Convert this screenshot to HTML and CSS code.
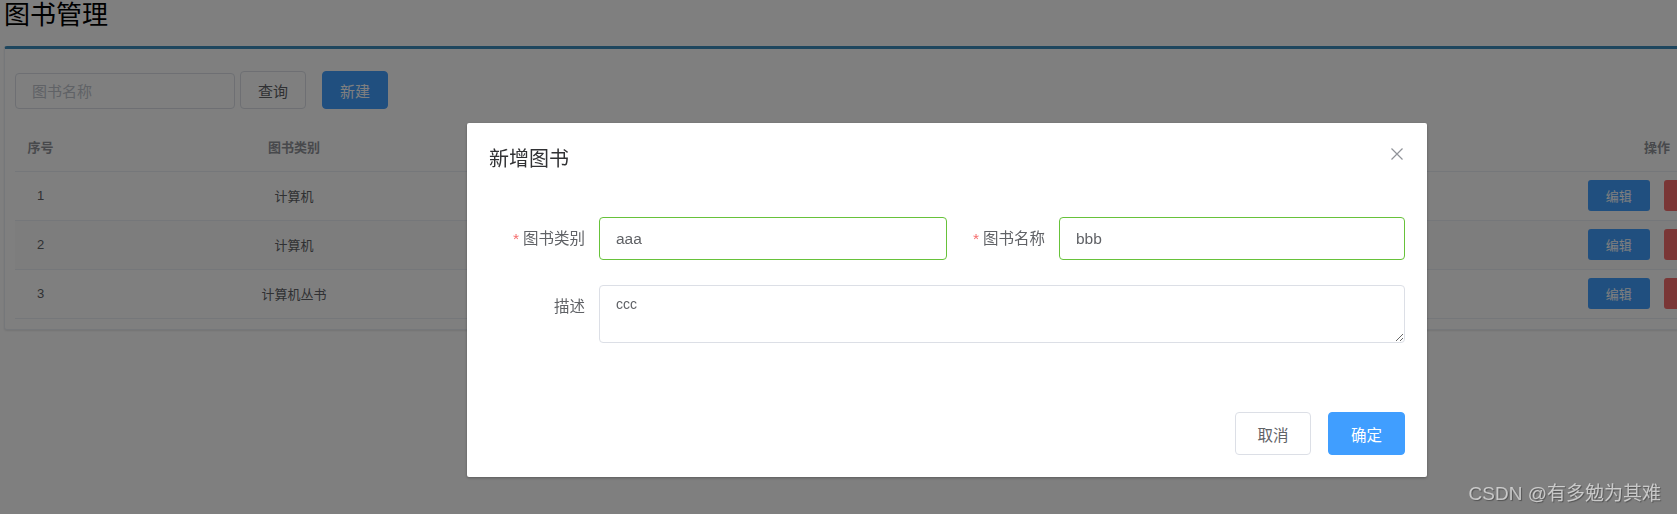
FILE: index.html
```html
<!DOCTYPE html>
<html lang="zh-CN">
<head>
    <meta charset="UTF-8">
    <meta name="viewport" content="width=device-width, initial-scale=1.0">
    <title>图书管理</title>
    <link rel="stylesheet" href="styles.css">
</head>
<body>
    <div class="page">
        <h2 class="page-title">图书管理</h2>

        <div class="box">
            <div class="toolbar">
                <input type="text" class="search-input" placeholder="图书名称">
                <button class="btn btn-query">查询</button>
                <button class="btn btn-primary">新建</button>
            </div>

            <table class="book-table">
                <colgroup>
                    <col class="col-index">
                    <col class="col-type">
                    <col class="col-name">
                    <col class="col-desc">
                    <col class="col-ops">
                </colgroup>
                <thead>
                    <tr>
                        <th>序号</th>
                        <th>图书类别</th>
                        <th>图书名称</th>
                        <th>描述</th>
                        <th>操作</th>
                    </tr>
                </thead>
                <tbody>
                    <tr>
                        <td>1</td>
                        <td>计算机</td>
                        <td>Java编程思想</td>
                        <td>经典</td>
                        <td>
                            <button class="btn-mini btn-edit">编辑</button>
                            <button class="btn-mini btn-delete">删除</button>
                        </td>
                    </tr>
                    <tr class="striped">
                        <td>2</td>
                        <td>计算机</td>
                        <td>算法导论</td>
                        <td>入门</td>
                        <td>
                            <button class="btn-mini btn-edit">编辑</button>
                            <button class="btn-mini btn-delete">删除</button>
                        </td>
                    </tr>
                    <tr>
                        <td>3</td>
                        <td>计算机丛书</td>
                        <td>深入理解计算机系统</td>
                        <td>进阶</td>
                        <td>
                            <button class="btn-mini btn-edit">编辑</button>
                            <button class="btn-mini btn-delete">删除</button>
                        </td>
                    </tr>
                </tbody>
            </table>
        </div>
    </div>

    <div class="dialog-wrapper">
        <div class="dialog">
            <div class="dialog-header">
                <span class="dialog-title">新增图书</span>
                <button class="dialog-close" aria-label="Close">
                    <svg width="12" height="12" viewBox="0 0 12 12">
                        <path d="M0.5 0.5 L11.5 11.5 M11.5 0.5 L0.5 11.5" stroke="#909399" stroke-width="1.2" fill="none"/>
                    </svg>
                </button>
            </div>

            <div class="dialog-body">
                <div class="form-row">
                    <div class="form-item form-item-half">
                        <label class="form-label"><span class="required">*</span>图书类别</label>
                        <input type="text" class="form-input is-success" value="aaa">
                    </div>
                    <div class="form-item form-item-rest">
                        <label class="form-label"><span class="required">*</span>图书名称</label>
                        <input type="text" class="form-input is-success" value="bbb">
                    </div>
                </div>
                <div class="form-row">
                    <div class="form-item form-item-rest">
                        <label class="form-label">描述</label>
                        <textarea class="form-textarea">ccc</textarea>
                    </div>
                </div>
            </div>

            <div class="dialog-footer">
                <button class="btn btn-cancel">取消</button>
                <button class="btn btn-confirm">确定</button>
            </div>
        </div>
    </div>

    <div class="watermark">CSDN @有多勉为其难</div>
</body>
</html>
```

FILE: styles.css
```css
* {
    margin: 0;
    padding: 0;
    box-sizing: border-box;
}

html,
body {
    overflow: hidden;
}

body {
    width: 1677px;
    height: 514px;
    background-color: #ffffff;
    color: #606266;
    font-family: "Liberation Sans", "Noto Sans CJK SC", sans-serif;
}

button,
input,
textarea {
    font-family: inherit;
}

.page {
    padding: 0 4px;
}

.page-title {
    font-size: 26px;
    font-weight: normal;
    line-height: 31px;
    color: #000000;
    margin-bottom: 15px;
}

/* card with the coloured top border */
.box {
    width: 1780px;
    background-color: #ffffff;
    border: 1px solid #ebeef5;
    border-top: 3px solid #3c8dbc;
    border-radius: 3px;
    box-shadow: 0 1px 2px rgba(0, 0, 0, 0.1);
    padding: 22px 10px 10px 10px;
}

.toolbar {
    display: flex;
    align-items: flex-end;
    height: 38px;
}

.search-input {
    width: 220px;
    height: 36px;
    border: 1px solid #dcdfe6;
    border-radius: 4px;
    padding: 0 16px;
    font-size: 15px;
    color: #606266;
    outline: none;
    margin-right: 5px;
}

.search-input::placeholder {
    color: #c0c4cc;
}

.btn {
    height: 38px;
    width: 66px;
    border: 1px solid #dcdfe6;
    border-radius: 4px;
    background-color: #ffffff;
    color: #606266;
    font-size: 15px;
    cursor: pointer;
}

.btn-query {
    margin-right: 16px;
}

.btn-primary {
    background-color: #409eff;
    border-color: #409eff;
    color: #ffffff;
}

/* table */
.book-table {
    margin-top: 13px;
    width: 1742px;
    table-layout: fixed;
    border-collapse: collapse;
    font-size: 13px;
}

.col-index { width: 51px; }
.col-type { width: 456px; }
.col-name { width: 518px; }
.col-desc { width: 517px; }
.col-ops { width: 200px; }

.book-table th,
.book-table td {
    height: 49px;
    padding: 0;
    text-align: center;
    border-bottom: 1px solid #ebeef5;
}

.book-table th {
    color: #909399;
    font-weight: bold;
}

.book-table td {
    color: #606266;
}

.book-table tr.striped td {
    background-color: #fafafa;
}

.btn-mini {
    width: 62px;
    height: 31px;
    border: none;
    border-radius: 3px;
    color: #ffffff;
    font-size: 13px;
    vertical-align: middle;
}

.btn-edit {
    background-color: #409eff;
}

.btn-delete {
    background-color: #f56c6c;
    margin-left: 11px;
}

/* dialog */
.dialog-wrapper {
    position: fixed;
    top: 0;
    left: 0;
    right: 0;
    bottom: 0;
    background-color: rgba(0, 0, 0, 0.5);
}

.dialog {
    width: 960px;
    margin: 123px 0 0 467px;
    background-color: #ffffff;
    border-radius: 2px;
    box-shadow: 0 1px 3px rgba(0, 0, 0, 0.3);
}

.dialog-header {
    position: relative;
    padding: 24px 20px 10px 22px;
}

.dialog-title {
    display: block;
    font-size: 20px;
    line-height: 24px;
    color: #303133;
}

.dialog-close {
    position: absolute;
    top: 25px;
    right: 24px;
    width: 12px;
    height: 12px;
    border: none;
    background: transparent;
    display: flex;
}

.dialog-body {
    padding: 36px 22px 69px 20px;
}

.form-row {
    display: flex;
}

.form-row + .form-row {
    margin-top: 25px;
}

.form-item {
    display: flex;
    align-items: flex-start;
}

.form-item-half {
    width: 460px;
}

.form-item-rest {
    flex: 1;
}

.form-label {
    width: 112px;
    flex-shrink: 0;
    padding-right: 14px;
    text-align: right;
    font-size: 15.5px;
    line-height: 43px;
    color: #606266;
}

.required {
    color: #f56c6c;
    margin-right: 4px;
}

.form-input {
    flex: 1;
    min-width: 0;
    height: 43px;
    border: 1px solid #dcdfe6;
    border-radius: 4px;
    padding: 0 16px;
    font-size: 15.5px;
    color: #606266;
    outline: none;
}

.form-input.is-success {
    border-color: #67c23a;
}

.form-textarea {
    flex: 1;
    height: 58px;
    border: 1px solid #dcdfe6;
    border-radius: 4px;
    padding: 8px 16px;
    font-size: 14px;
    line-height: 1.5;
    color: #606266;
    outline: none;
    resize: vertical;
}

.dialog-footer {
    display: flex;
    justify-content: flex-end;
    gap: 17px;
    padding: 0 22px 22px;
}

.btn-cancel,
.btn-confirm {
    height: 43px;
    font-size: 15.5px;
}

.btn-cancel {
    width: 76px;
}

.btn-confirm {
    width: 77px;
    background-color: #409eff;
    border-color: #409eff;
    color: #ffffff;
}

.watermark {
    position: fixed;
    right: 16px;
    bottom: 10px;
    font-size: 19px;
    line-height: 20px;
    color: rgba(255, 255, 255, 0.62);
    text-shadow: 1px 1px 1px rgba(0, 0, 0, 0.35);
}
```
